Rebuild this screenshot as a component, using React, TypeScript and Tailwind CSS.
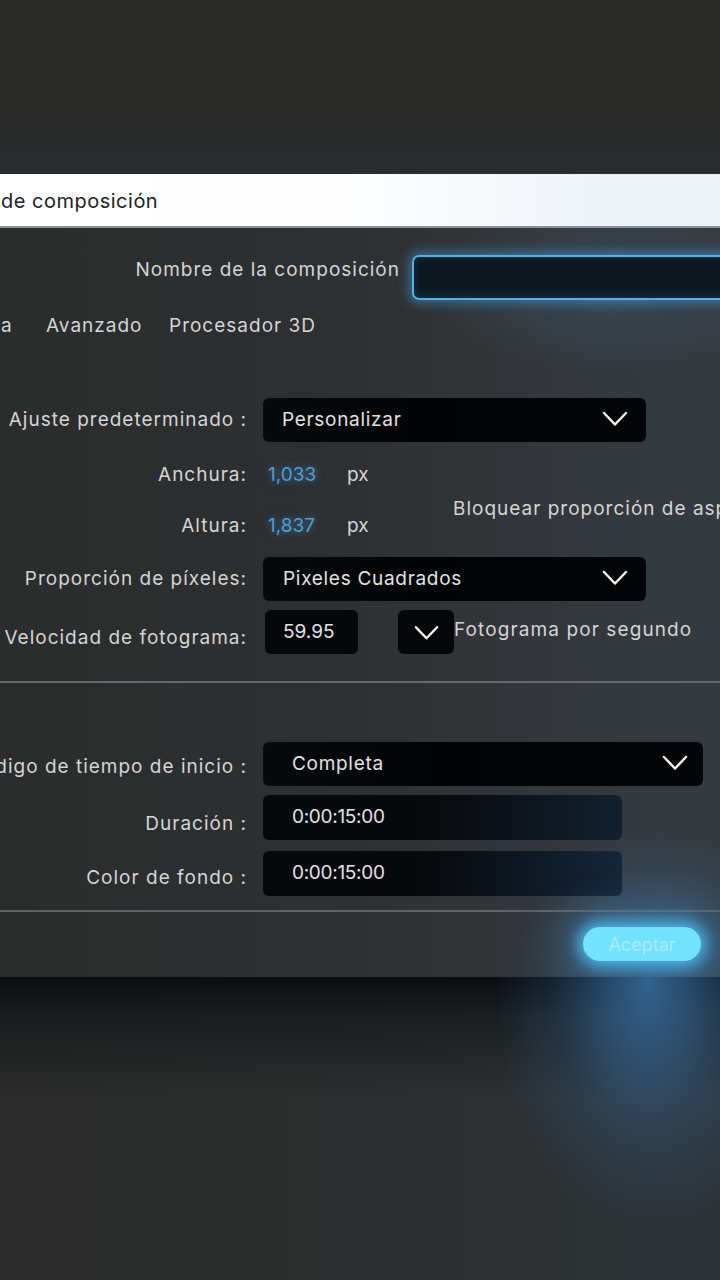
import React from "react";

const font = { fontFamily: "Inter, 'Noto Sans', sans-serif" };

function Chevron({ className = "" }: { className?: string }) {
  return (
    <svg viewBox="0 0 26 16" className={className} fill="none">
      <polyline points="2,2 13,13.5 24,2" stroke="#f4f4f4" strokeWidth="2.5" strokeLinecap="round" strokeLinejoin="round" />
    </svg>
  );
}

function Label({ children, w = "w-[247px]" }: { children: React.ReactNode; w?: string }) {
  return (
    <div className={`${w} shrink-0 flex justify-end whitespace-nowrap text-[19px] tracking-[1px] text-[#d4d5d6]`}>
      <span>{children}</span>
    </div>
  );
}

function Select({ value, w, pr, pl = "pl-[19px]" }: { value: string; w: string; pr: string; pl?: string }) {
  return (
    <div
      className={`${w} h-[44px] shrink-0 rounded-[6px] bg-[linear-gradient(90deg,#07090b,#020304_40%,#040506)] flex items-center justify-between ${pl} ${pr}`}
    >
      <span className="text-[19px] tracking-[0.7px] text-[#e2e2e2]">{value}</span>
      <Chevron className="w-[26px] h-[16px] -mt-[3px]" />
    </div>
  );
}

function TimeField({ value, glow }: { value: string; glow: string }) {
  return (
    <div className={`w-[359px] h-[45px] rounded-[6px] ${glow} flex items-center pl-[29px] text-[19px] tracking-[-0.3px] text-[#e2e2e2]`}>
      {value}
    </div>
  );
}

export default function App() {
  return (
    <div
      style={font}
      className="w-[720px] h-[1280px] overflow-hidden flex flex-col bg-[#292a28]"
    >
      {/* desktop above the window */}
      <div className="h-[174px] shrink-0 bg-[linear-gradient(180deg,#292a28_0%,#292a28_60%,rgba(41,43,46,1)_100%)]" />

      {/* composition settings window */}
      <div className="w-[780px] shrink-0 flex flex-col">
        <div className="h-[54px] flex items-center bg-[linear-gradient(90deg,#ffffff_0%,#fdfeff_45%,#eaf1f8_85%,#f0f4f8_100%)] border-b-2 border-[#8d8f91]">
          <span className="text-[20px] tracking-[0.5px] text-[#202224] pl-[1px] pt-[1px]">de composición</span>
        </div>

        <div className="h-[749px] flex flex-col bg-[radial-gradient(ellipse_260px_120px_at_78%_8%,rgba(70,100,125,0.35),transparent_70%),radial-gradient(ellipse_200px_200px_at_84%_99%,rgba(70,130,185,0.5),transparent_70%),linear-gradient(90deg,#2b2c2c_0%,#2d2f31_40%,#33383d_75%,#353b41_100%)]">
          {/* name */}
          <div className="flex items-center gap-[12px] mt-[27px]">
            <div className="-mt-[14px]">
              <Label w="w-[400px]">Nombre de la composición</Label>
            </div>
            <div className="w-[340px] h-[45px] rounded-[7px] border-2 border-[#52b2ea] bg-[linear-gradient(180deg,#0c151c,#0d1a22)] shadow-[0_0_12px_3px_rgba(70,160,225,0.55),inset_0_0_8px_rgba(70,160,225,0.25)]" />
          </div>

          {/* tabs */}
          <div className="flex items-center h-[24px] mt-[14px] text-[19px] tracking-[1px] text-[#d4d5d6] whitespace-nowrap">
            <span className="pl-[1px] w-[46px]">a</span>
            <span className="w-[123px]">Avanzado</span>
            <span>Procesador 3D</span>
          </div>

          {/* preset */}
          <div className="flex items-center gap-[16px] mt-[60px]">
            <Label>Ajuste predeterminado :</Label>
            <Select value="Personalizar" w="w-[383px]" pr="pr-[18px]" />
          </div>

          {/* size */}
          <div className="flex mt-[18px]">
            <div className="w-[453px] shrink-0 flex flex-col gap-[21px]">
              <div className="flex items-center h-[30px] gap-[21px]">
                <Label>Anchura:</Label>
                <span className="w-[58px] text-[19px] text-[#4d9fd8] [text-shadow:0_0_8px_rgba(80,160,230,0.7)]">1,033</span>
                <span className="text-[19px] text-[#d4d5d6]">px</span>
              </div>
              <div className="flex items-center h-[30px] gap-[21px]">
                <Label>Altura:</Label>
                <span className="w-[58px] text-[19px] text-[#4d9fd8] [text-shadow:0_0_8px_rgba(80,160,230,0.7)]">1,837</span>
                <span className="text-[19px] text-[#d4d5d6]">px</span>
              </div>
            </div>
            <div className="pt-[35px] text-[19px] tracking-[1px] text-[#d4d5d6] whitespace-nowrap">Bloquear proporción de aspecto</div>
          </div>

          {/* pixel aspect */}
          <div className="flex items-center gap-[16px] mt-[16px]">
            <Label>Proporción de píxeles:</Label>
            <Select value="Pixeles Cuadrados" w="w-[383px]" pr="pr-[18px]" pl="pl-[20px]" />
          </div>

          {/* frame rate */}
          <div className="flex items-center mt-[9px] h-[44px]">
            <div className="pt-[12px]">
              <Label>Velocidad de fotograma:</Label>
            </div>
            <div className="ml-[18px] w-[93px] h-[44px] rounded-[6px] bg-[#050709] flex items-center pl-[18px] text-[19px] text-[#e2e2e2]">59.95</div>
            <div className="ml-[40px] w-[56px] h-[44px] rounded-[6px] bg-[#050709] flex items-center justify-center">
              <Chevron className="w-[25px] h-[16px] mt-[2px]" />
            </div>
            <span className="text-[19px] tracking-[1.1px] text-[#d4d5d6] whitespace-nowrap -mt-[4px]">Fotograma por segundo</span>
          </div>

          <div className="h-[2px] bg-[#66696c] mt-[27px]" />

          {/* timecode */}
          <div className="flex items-center gap-[16px] mt-[59px]">
            <div className="pt-[6px]">
              <Label>Código de tiempo de inicio :</Label>
            </div>
            <Select value="Completa" w="w-[440px]" pr="pr-[15px]" pl="pl-[29px]" />
          </div>

          <div className="flex items-center gap-[16px] mt-[9px]">
            <div className="pt-[13px]">
              <Label>Duración :</Label>
            </div>
            <TimeField value="0:00:15:00" glow="bg-[linear-gradient(90deg,#06080a_0%,#07090c_45%,#132030_100%)]" />
          </div>

          <div className="flex items-center gap-[16px] mt-[11px]">
            <div className="pt-[10px]">
              <Label>Color de fondo :</Label>
            </div>
            <TimeField value="0:00:15:00" glow="bg-[linear-gradient(90deg,#06080a_0%,#07090c_45%,#15263a_100%)]" />
          </div>

          <div className="h-[2px] bg-[#5f6366] mt-[14px]" />

          <div className="flex mt-[15px] pl-[583px]">
            <div className="w-[118px] h-[34px] rounded-full bg-[#72e2ff] shadow-[0_0_14px_6px_rgba(80,200,255,0.75),0_0_40px_14px_rgba(60,150,220,0.4)] flex items-center justify-center text-[18px] text-[rgba(255,255,255,0.4)]">
              Aceptar
            </div>
          </div>
        </div>
      </div>

      {/* desktop below the window, with the window's shadow and glow */}
      <div className="flex-1 bg-[radial-gradient(ellipse_170px_280px_at_90%_0%,rgba(62,128,190,0.75),rgba(50,100,150,0.25)_55%,transparent_90%),linear-gradient(180deg,#0a0d0f_0%,rgba(20,24,26,0.7)_40px,rgba(42,43,43,0)_120px),linear-gradient(90deg,#2a2b2a_0%,#2b2d2e_45%,#2d3438_100%)]" />
    </div>
  );
}
